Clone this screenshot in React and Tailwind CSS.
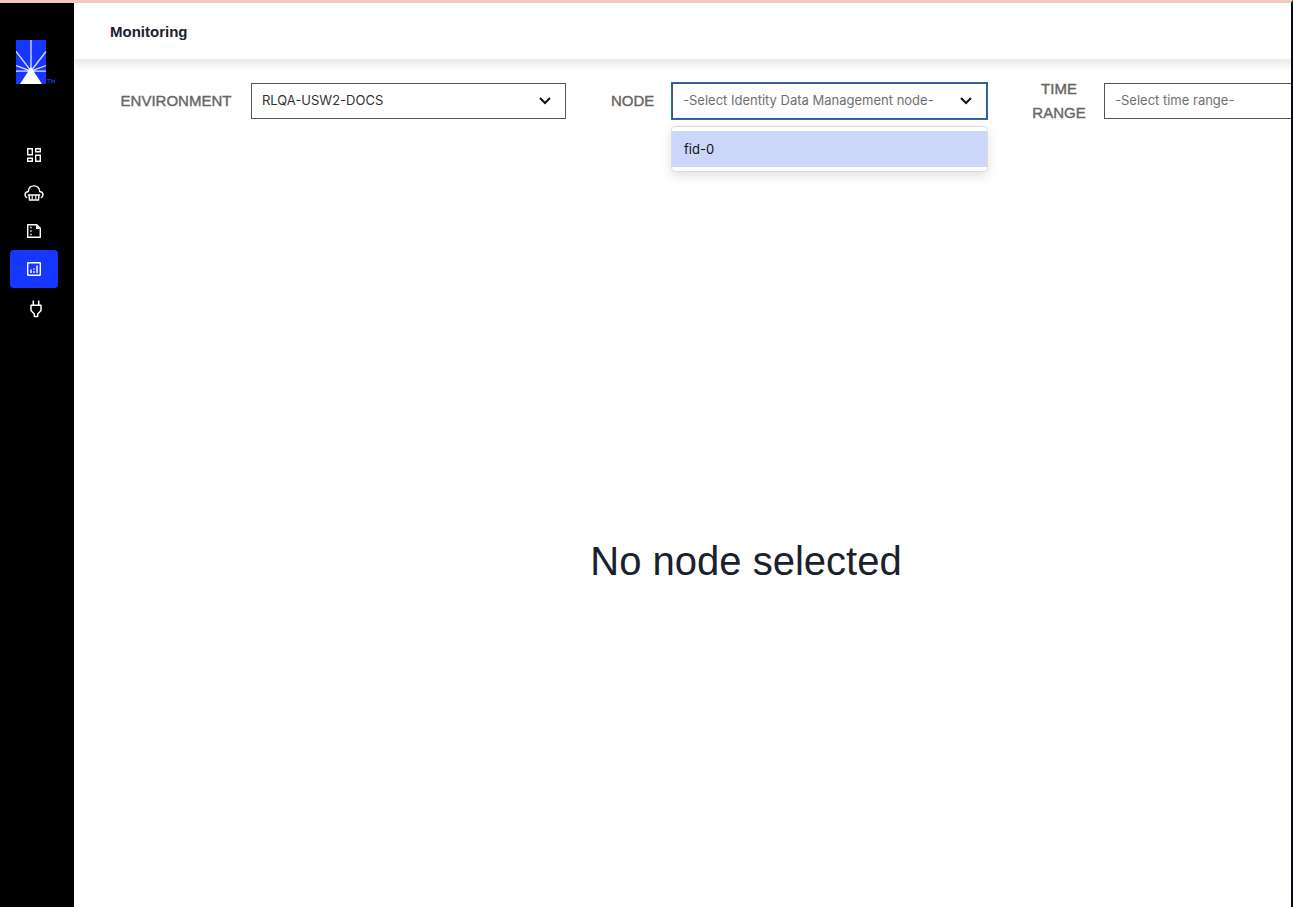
import React from "react";

function Logo() {
  return (
    <svg width="42" height="44" viewBox="0 0 42 44" role="img" aria-label="Home">
      <rect width="30" height="44" fill="#1637ff" />
      <g stroke="#dfe4ff" strokeWidth="1.3">
        <path d="M15 0V31M0 31.2H30M0 11.5L15 31L30 11.5M0 25.5L15 31L30 25.5" fill="none" />
      </g>
      <path d="M15 27l2.5 4L26 44H4l8.500-13z" fill="#fff" />
      <path d="M31 39.500h4M33 39.500v4M35.500 43.500v-4l1.500 2.500 1.500-2.500v4" fill="none" stroke="#1530c0" strokeWidth="1" />
    </svg>
  );
}

function DashboardIcon() {
  return (
    <svg width="20" height="20" viewBox="0 0 20 20" fill="none" stroke="#fff" strokeWidth="1.4">
      <path d="M3.700 3.700h4.600v6H3.700zM11.700 3.700h4.600v3h-4.600zM3.700 13.300h4.600v3H3.700zM11.700 10.300h4.600v6h-4.600z" />
    </svg>
  );
}

function CloudIcon() {
  return (
    <svg width="20" height="20" viewBox="0 0 20 20" fill="none" stroke="#fff" strokeWidth="1.4">
      <path d="M3.200 14.800C1.700 14.300 1 13.200 1 11.800c0-1.800 1.300-3 3.300-3.300C4.600 5 6.800 2.900 10 2.900s5.400 2.100 5.700 5.600c2 .300 3.300 1.500 3.300 3.300 0 1.400-.700 2.500-2.200 3" />
      <path d="M3.800 12h12.400M5 12l.500 5h9l.500-5" />
      <path d="M8.200 12v4.500M11.800 12v4.500" strokeWidth="1.100" />
    </svg>
  );
}

function NotesIcon() {
  return (
    <svg width="20" height="20" viewBox="0 0 20 20" fill="none" stroke="#fff" strokeWidth="1.4">
      <path d="M3.700 3.700h9l3.600 3.600v9H3.700z" strokeLinejoin="round" />
      <path d="M12 4v4h4z" fill="#fff" stroke="none" />
      <path d="M6.300 6.500h1.400M6.300 10h1.400M6.300 13.500h1.400" />
    </svg>
  );
}

function ChartIcon() {
  return (
    <svg width="20" height="20" viewBox="0 0 20 20" fill="none" stroke="#fff" strokeWidth="1.4">
      <rect x="3.700" y="3.700" width="12.600" height="12.600" rx="0.500" />
      <path d="M7 10.500V14M10 12v2M10 9.500v1.200M13 6.500V14" />
    </svg>
  );
}

function PlugIcon() {
  return (
    <svg width="20" height="20" viewBox="0 0 20 20" fill="none" stroke="#fff" strokeWidth="1.5">
      <path d="M7.300 1.500v4.500M12.700 1.500v4.500M5 6.200h10v5.300l-3.300 3.500v2.500H8.300V15L5 11.500z" strokeLinejoin="round" />
    </svg>
  );
}

const navItems = [
  { label: "Dashboard", Icon: DashboardIcon },
  { label: "Environments", Icon: CloudIcon },
  { label: "Reports", Icon: NotesIcon },
  { label: "Monitoring", Icon: ChartIcon, active: true },
  { label: "Integrations", Icon: PlugIcon, shifted: true },
];

function Sidebar() {
  return (
    <aside className="flex w-[74px] shrink-0 flex-col bg-black pt-[37px]">
      <a href="#" className="ml-4 block">
        <Logo />
      </a>
      <nav aria-label="Main" className="mt-[52px] flex flex-col px-[10px]">
        {navItems.map(({ label, Icon, active, shifted }) => (
          <a
            key={label}
            href="#"
            aria-label={label}
            aria-current={active ? "page" : undefined}
            className={`flex h-[38px] w-12 items-center justify-center rounded ${active ? "bg-[#1637ff]" : ""} ${shifted ? "mt-[2px] pl-1" : ""}`}
          >
            <Icon />
          </a>
        ))}
      </nav>
    </aside>
  );
}

function Filter({ id, label, labelClass, value, muted, open, options }) {
  return (
    <div className="flex shrink-0 items-center gap-[18px]">
      <label htmlFor={id} className={`text-center font-['Liberation_Sans',sans-serif] text-[15px] leading-6 text-[#666] [-webkit-text-stroke:0.4px_#666] ${labelClass}`}>
        {label}
      </label>
      <div className="relative w-[315px]">
        <select
          id={id}
          className={`block h-9 w-full appearance-none border border-[#555] bg-white pr-10 pl-[10px] font-['Inter',sans-serif] text-[13px] outline-none ${muted ? "text-[#707070]" : "text-[#333]"} ${open ? "ring-1 ring-[#0f6fde]" : ""}`}
        >
          <option>{value}</option>
          {options?.map((o) => <option key={o}>{o}</option>)}
        </select>
        <svg className="pointer-events-none absolute top-3 right-[15px]" width="12" height="12" viewBox="0 0 12 12" fill="none" stroke="#111" strokeWidth="2">
          <path d="M1 3l5 5 5-5" />
        </svg>
        {open && (
          <ul role="listbox" aria-label={label} className="absolute top-full -right-px -left-px mt-[7px] rounded border border-[#dcdcdc] bg-white py-1 shadow-[0_4px_12px_rgba(0,0,0,0.12)]">
            {options.map((o) => (
              <li key={o} role="option" aria-selected="true" className="flex h-9 items-center bg-[#ccd6fb] px-3 pt-px font-['Inter',sans-serif] text-[13px] text-[#111]">
                {o}
              </li>
            ))}
          </ul>
        )}
      </div>
    </div>
  );
}

export default function App() {
  return (
    <div className="flex min-h-screen overflow-hidden border-t-[3px] border-r-2 border-t-[#f2c9bd] border-r-[#080c10] bg-white font-['Inter',sans-serif] text-[#1a202c]">
      <Sidebar />
      <main className="flex min-w-0 flex-1 flex-col overflow-hidden">
        <header className="flex h-14 shrink-0 items-center pt-[2px] pl-9 shadow-[0_4px_8px_2px_rgba(0,0,0,0.09)]">
          <h1 className="font-['Liberation_Sans',sans-serif] text-[15px] font-bold">Monitoring</h1>
        </header>
        <div className="flex items-center gap-[45px] pt-[18px] pl-[45px]">
          <Filter id="environment" label="ENVIRONMENT" labelClass="w-[114px]" value="RLQA-USW2-DOCS" />
          <Filter id="node" label="NODE" labelClass="w-[43px]" value="-Select Identity Data Management node-" muted open options={["fid-0"]} />
          <Filter id="time-range" label="TIME RANGE" labelClass="w-[54px]" value="-Select time range-" muted />
        </div>
        <section className="flex flex-1 items-center justify-center pt-[90px] pl-[127px]">
          <p className="font-['Liberation_Sans',sans-serif] text-[40px] leading-[48px]">No node selected</p>
        </section>
      </main>
    </div>
  );
}
